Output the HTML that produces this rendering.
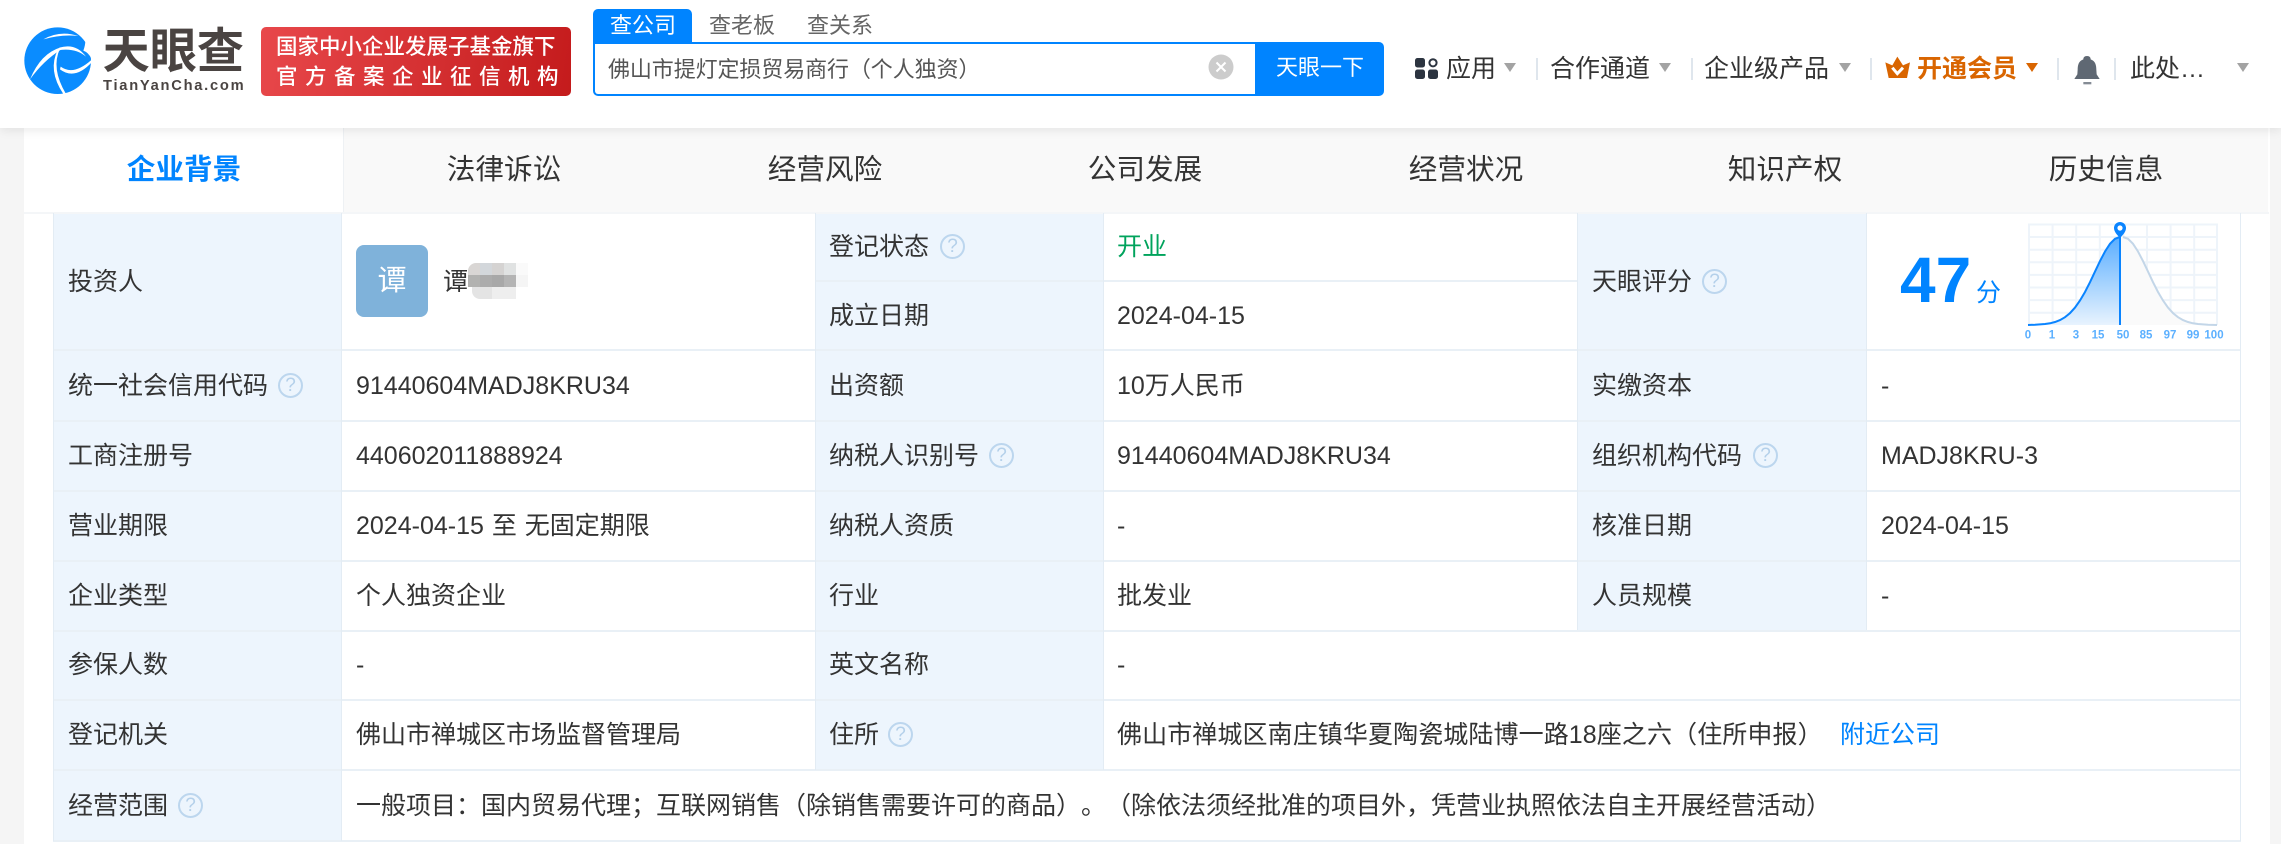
<!DOCTYPE html>
<html lang="zh-CN">
<head>
<meta charset="utf-8">
<title>天眼查</title>
<style>
*{box-sizing:border-box}
html,body{margin:0;padding:0}
body{position:relative;width:2281px;height:844px;overflow:hidden;background:#f5f5f5;color:#333;font-family:"Liberation Sans","Noto Sans CJK SC",sans-serif;text-spacing-trim:space-all}
.a{position:absolute}
.t{position:absolute;white-space:nowrap;line-height:40px;height:40px;font-size:25px;margin-top:1px}
.v{font-size:25px;color:#333}
.h{position:absolute;height:2px;background:#e9f0f6}
.w{position:absolute;width:1px;background:#e3ecf4}
.lb{position:absolute;background:#edf5fd}
.sep{position:absolute;top:58px;width:2px;height:22px;background:#dfe6ed}
.ar{position:absolute;top:63px;width:0;height:0;border-left:6.5px solid transparent;border-right:6.5px solid transparent;border-top:9px solid #a3a3a3}
.q{position:absolute;width:25px;height:25px;border:2px solid #bcd6ee;border-radius:50%;color:#b4d0ea;font-size:19px;line-height:21px;text-align:center}
.tab{position:absolute;top:148px;width:320px;text-align:center;font-size:28.6px;line-height:44px;color:#333;white-space:nowrap}
.m{position:absolute;width:12px;height:12px}
</style>
</head>
<body>
<!-- page panel -->
<div class="a" style="left:24px;top:128px;width:2246px;height:716px;background:#fff"></div>
<!-- tab bar -->
<div class="a" style="left:343px;top:128px;width:1925px;height:85px;background:#f9f9f9;border-left:1px solid #eef1f4"></div>
<div class="tab" style="left:24px;color:#0084ff;font-weight:700">企业背景</div>
<div class="tab" style="left:344px">法律诉讼</div>
<div class="tab" style="left:665px">经营风险</div>
<div class="tab" style="left:985px">公司发展</div>
<div class="tab" style="left:1306px">经营状况</div>
<div class="tab" style="left:1625px">知识产权</div>
<div class="tab" style="left:1946px">历史信息</div>

<!-- header -->
<div class="a" style="left:0;top:0;width:2281px;height:128px;background:#fff;box-shadow:0 2px 10px rgba(0,0,0,.09)"></div>

<!-- logo -->
<svg class="a" style="left:10px;top:10px" width="260" height="100" viewBox="0 0 780 300">
<circle cx="143" cy="152" r="100" fill="#0a8cff"/>
<path d="M100 88 Q150 60 205 78 Q155 72 100 88Z" fill="#fff"/>
<path d="M148 113 Q198 98 228 140 Q198 114 150 120Z" fill="#fff"/>
<path d="M152 112 Q92 130 60 208 Q100 152 154 118Z" fill="#fff"/>
<path d="M150 116 Q122 175 168 252 L160 252 Q112 180 144 118Z" fill="#fff"/>
<path d="M152 170 Q190 198 244 150 L246 156 Q195 212 150 178Z" fill="#fff"/>
<path d="M226 92 Q244 118 244 146 Q236 128 220 122 Q226 106 226 92Z" fill="#fff"/>
<text x="278" y="172" font-family="Noto Sans CJK SC,sans-serif" font-weight="700" font-size="144" fill="#4a4442" textLength="424" lengthAdjust="spacingAndGlyphs">天眼查</text>
<text x="279" y="240" font-family="Liberation Sans,sans-serif" font-weight="700" font-size="44" fill="#4a4442" textLength="422" lengthAdjust="spacing">TianYanCha.com</text>
</svg>

<!-- red badge -->
<div class="a" style="left:261px;top:27px;width:310px;height:69px;border-radius:5px;background:linear-gradient(100deg,#e8484b,#c41b1c)"></div>
<div class="t" style="left:276px;top:27px;font-size:21.5px;font-weight:500;color:#fff;line-height:38px;height:38px">国家中小企业发展子基金旗下</div>
<div class="t" style="left:276px;top:57px;font-size:21.5px;font-weight:500;color:#fff;line-height:38px;height:38px;letter-spacing:7.5px">官方备案企业征信机构</div>

<!-- search tabs -->
<div class="a" style="left:593px;top:9px;width:99px;height:34px;background:#0084ff;border-radius:5px 5px 0 0"></div>
<div class="t" style="left:610px;top:5px;font-size:22px;color:#fff">查公司</div>
<div class="t" style="left:709px;top:5px;font-size:22px;color:#666">查老板</div>
<div class="t" style="left:807px;top:5px;font-size:22px;color:#666">查关系</div>
<!-- search box -->
<div class="a" style="left:593px;top:42px;width:664px;height:54px;border:2px solid #0084ff;border-right:0;border-radius:0 0 0 5px;background:#fff"></div>
<div class="t" style="left:608px;top:49px;font-size:22px;color:#555;letter-spacing:-.1px">佛山市提灯定损贸易商行（个人独资）</div>
<svg class="a" style="left:1208px;top:54px" width="26" height="26" viewBox="0 0 26 26"><circle cx="13" cy="13" r="12.5" fill="#cccccc"/><path d="M8.5 8.5L17.5 17.5M17.5 8.5L8.5 17.5" stroke="#fff" stroke-width="2" fill="none"/></svg>
<div class="a" style="left:1255px;top:42px;width:129px;height:54px;background:#0084ff;border-radius:0 5px 5px 0"></div>
<div class="t" style="left:1276px;top:47px;font-size:22px;color:#fff">天眼一下</div>

<!-- nav -->
<svg class="a" style="left:1415px;top:58px" width="23" height="21" viewBox="0 0 23 21">
<rect x="0" y="0" width="10" height="9.5" rx="2.5" fill="#2c3440"/>
<circle cx="18" cy="4.8" r="3.6" fill="none" stroke="#2c3440" stroke-width="2"/>
<rect x="0" y="11.5" width="10" height="9.5" rx="2.5" fill="#2c3440"/>
<rect x="13" y="11.5" width="10" height="9.5" rx="2.5" fill="#2c3440"/>
</svg>
<div class="t" style="left:1446px;top:48px">应用</div>
<div class="ar" style="left:1504px"></div>
<div class="sep" style="left:1536px"></div>
<div class="t" style="left:1550px;top:48px">合作通道</div>
<div class="ar" style="left:1659px"></div>
<div class="sep" style="left:1691px"></div>
<div class="t" style="left:1704px;top:48px">企业级产品</div>
<div class="ar" style="left:1839px"></div>
<div class="sep" style="left:1870px"></div>
<svg class="a" style="left:1875px;top:45px" width="250" height="50" viewBox="0 0 750 150">
<path d="M31 52 L52 61 L67 35 L84 61 L105 52 L96 99 L41 99Z" fill="#d96500"/>
<path d="M52 68 L67 86 L84 68" fill="none" stroke="#fff" stroke-width="9"/>
<path d="M636 33 c-8 0-11 5-11 10 c-14 5-17 17-17 31 l-1 14 -9 14 h76 l-9-14 -1-14 c0-14-3-26-17-31 c0-5-3-10-11-10z" fill="#5f6873"/>
<rect x="625" y="111" width="24" height="7" fill="#858c95"/>
</svg>
<div class="t" style="left:1917px;top:48px;font-weight:700;color:#d96500">开通会员</div>
<div class="ar" style="left:2026px;border-top-color:#d96500"></div>
<div class="sep" style="left:2057px"></div>
<div class="sep" style="left:2114px"></div>
<div class="t" style="left:2130px;top:48px">此处…</div>
<div class="ar" style="left:2237px"></div>

<!-- table label backgrounds -->
<div class="lb" style="left:53px;top:213px;width:288px;height:627px"></div>
<div class="lb" style="left:815px;top:213px;width:288px;height:557px"></div>
<div class="lb" style="left:1577px;top:213px;width:289px;height:417px"></div>

<!-- lines -->
<div class="a" style="left:24px;top:212px;width:2245px;height:2px;background:#f4f6f8"></div>
<div class="h" style="left:815px;top:280px;width:762px"></div>
<div class="h" style="left:53px;top:349px;width:2188px"></div>
<div class="h" style="left:53px;top:420px;width:2188px"></div>
<div class="h" style="left:53px;top:490px;width:2188px"></div>
<div class="h" style="left:53px;top:560px;width:2188px"></div>
<div class="h" style="left:53px;top:630px;width:2188px"></div>
<div class="h" style="left:53px;top:699px;width:2188px"></div>
<div class="h" style="left:53px;top:769px;width:2188px"></div>
<div class="h" style="left:53px;top:840px;width:2188px"></div>
<div class="w" style="left:53px;top:213px;height:628px"></div>
<div class="w" style="left:341px;top:213px;height:628px"></div>
<div class="w" style="left:815px;top:213px;height:557px"></div>
<div class="w" style="left:1103px;top:213px;height:557px"></div>
<div class="w" style="left:1577px;top:213px;height:417px"></div>
<div class="w" style="left:1866px;top:213px;height:417px"></div>
<div class="w" style="left:2240px;top:213px;height:628px"></div>

<!-- column 1 -->
<div class="t" style="left:68px;top:261px">投资人</div>
<div class="t" style="left:68px;top:365px">统一社会信用代码</div>
<div class="q" style="left:278px;top:373px">?</div>
<div class="t" style="left:68px;top:435px">工商注册号</div>
<div class="t" style="left:68px;top:505px">营业期限</div>
<div class="t" style="left:68px;top:575px">企业类型</div>
<div class="t" style="left:68px;top:644px">参保人数</div>
<div class="t" style="left:68px;top:714px">登记机关</div>
<div class="t" style="left:68px;top:785px">经营范围</div>
<div class="q" style="left:178px;top:793px">?</div>

<!-- column 2 -->
<div class="a" style="left:356px;top:245px;width:72px;height:72px;background:#7fb2da;border-radius:8px;color:#fff;font-size:29px;line-height:72px;text-align:center">谭</div>
<div class="t" style="left:443px;top:261px">谭</div>
<div class="m" style="left:468px;top:263px;background:#d9d6d4;border-radius:8px 0 0 0"></div>
<div class="m" style="left:480px;top:263px;background:#d3d7db"></div>
<div class="m" style="left:492px;top:263px;background:#d5d3d2"></div>
<div class="m" style="left:504px;top:263px;background:#e0e2e2"></div>
<div class="m" style="left:516px;top:263px;background:#fafafa"></div>
<div class="m" style="left:468px;top:275px;background:#b2b2b0"></div>
<div class="m" style="left:480px;top:275px;background:#acacac"></div>
<div class="m" style="left:492px;top:275px;background:#a8a8a8"></div>
<div class="m" style="left:504px;top:275px;background:#b4b4b4"></div>
<div class="m" style="left:516px;top:275px;background:#f5f5f5"></div>
<div class="m" style="left:472px;top:287px;width:8px;background:#e4e4e4;border-radius:0 0 0 8px"></div>
<div class="m" style="left:480px;top:287px;background:#e4e4e4"></div>
<div class="m" style="left:492px;top:287px;background:#eeeeee"></div>
<div class="m" style="left:504px;top:287px;background:#eeeeee"></div>
<div class="t" style="left:356px;top:365px">91440604MADJ8KRU34</div>
<div class="t" style="left:356px;top:435px">440602011888924</div>
<div class="t" style="left:356px;top:505px;word-spacing:1px">2024-04-15 至 无固定期限</div>
<div class="t" style="left:356px;top:575px">个人独资企业</div>
<div class="t" style="left:356px;top:644px">-</div>
<div class="t" style="left:356px;top:714px">佛山市禅城区市场监督管理局</div>
<div class="t" style="left:356px;top:785px">一般项目：国内贸易代理；互联网销售（除销售需要许可的商品）。（除依法须经批准的项目外，凭营业执照依法自主开展经营活动）</div>

<!-- column 3 -->
<div class="t" style="left:829px;top:226px">登记状态</div>
<div class="q" style="left:940px;top:234px">?</div>
<div class="t" style="left:829px;top:295px">成立日期</div>
<div class="t" style="left:829px;top:365px">出资额</div>
<div class="t" style="left:829px;top:435px">纳税人识别号</div>
<div class="q" style="left:989px;top:443px">?</div>
<div class="t" style="left:829px;top:505px">纳税人资质</div>
<div class="t" style="left:829px;top:575px">行业</div>
<div class="t" style="left:829px;top:644px">英文名称</div>
<div class="t" style="left:829px;top:714px">住所</div>
<div class="q" style="left:888px;top:722px">?</div>

<!-- column 4 -->
<div class="t" style="left:1117px;top:226px;color:#00a35c">开业</div>
<div class="t" style="left:1117px;top:295px">2024-04-15</div>
<div class="t" style="left:1117px;top:365px">10万人民币</div>
<div class="t" style="left:1117px;top:435px">91440604MADJ8KRU34</div>
<div class="t" style="left:1117px;top:505px">-</div>
<div class="t" style="left:1117px;top:575px">批发业</div>
<div class="t" style="left:1117px;top:644px">-</div>
<div class="t" style="left:1117px;top:714px;letter-spacing:.1px">佛山市禅城区南庄镇华夏陶瓷城陆博一路18座之六（住所申报）</div>
<div class="t" style="left:1840px;top:714px;color:#0084ff">附近公司</div>

<!-- column 5 -->
<div class="t" style="left:1592px;top:261px">天眼评分</div>
<div class="q" style="left:1702px;top:269px">?</div>
<div class="t" style="left:1592px;top:365px">实缴资本</div>
<div class="t" style="left:1592px;top:435px">组织机构代码</div>
<div class="q" style="left:1753px;top:443px">?</div>
<div class="t" style="left:1592px;top:505px">核准日期</div>
<div class="t" style="left:1592px;top:575px">人员规模</div>

<!-- column 6 -->
<div class="a" style="left:1900px;top:242px;font-size:64px;line-height:76px;font-weight:700;color:#0084ff;white-space:nowrap">47</div>
<div class="t" style="left:1976px;top:272px;color:#0084ff">分</div>
<svg class="a" style="left:2020px;top:215px" width="220" height="130" viewBox="2020 215 220 130">
<defs><linearGradient id="g" x1="0" y1="0" x2="0" y2="1"><stop offset="0" stop-color="#5aaeff"/><stop offset="1" stop-color="#e8f3fe"/></linearGradient></defs>
<g stroke="#eef4fa" stroke-width="2" fill="none">
<path d="M2029 224V325M2052.600 224V325M2076.200 224V325M2099.800 224V325M2123.400 224V325M2147 224V325M2170.600 224V325M2194.200 224V325M2217 224V325"/>
<path d="M2028 224.500H2218M2028 237H2218M2028 249.700H2218M2028 262.300H2218M2028 274.900H2218M2028 287.500H2218M2028 300.100H2218M2028 312.700H2218"/>
</g>
<path d="M2120 237H2123L2128 238.800L2133 243.800L2138 251.500L2143 261.100L2148 271.600L2153 282.200L2158 292L2163 300.500L2168 307.600L2173 313.100L2178 317.200L2183 320.100L2188 322L2193 323.300L2198 324L2208 324.700L2217 325H2120Z" fill="#fafafa"/>
<path d="M2123 237L2128 238.800L2133 243.800L2138 251.500L2143 261.100L2148 271.600L2153 282.200L2158 292L2163 300.500L2168 307.600L2173 313.100L2178 317.200L2183 320.100L2188 322L2193 323.300L2198 324L2208 324.700L2217 325" fill="none" stroke="#c3d6e8" stroke-width="2"/>
<path d="M2028 325L2035 324.700L2045 324L2050 323.300L2055 322L2060 320.100L2065 317.200L2070 313.100L2075 307.600L2080 300.500L2085 292L2090 282.200L2095 271.600L2100 261.100L2105 251.500L2110 243.800L2115 238.800L2120 237V325Z" fill="url(#g)"/>
<path d="M2028 325L2035 324.700L2045 324L2050 323.300L2055 322L2060 320.100L2065 317.200L2070 313.100L2075 307.600L2080 300.500L2085 292L2090 282.200L2095 271.600L2100 261.100L2105 251.500L2110 243.800L2115 238.800L2120 237" fill="none" stroke="#0a84ff" stroke-width="2"/>
<path d="M2120 236V325" stroke="#0a84ff" stroke-width="2"/>
<path d="M2120 238 C2116 234 2114 231 2114 228 A6 6 0 0 1 2126 228 C2126 231 2124 234 2120 238Z" fill="#0a84ff"/>
<circle cx="2120" cy="228" r="2.600" fill="#fff"/>
<g font-family="Liberation Sans,sans-serif" font-size="11.500" fill="#5cb0ff" text-anchor="middle" font-weight="700">
<text x="2028" y="338.500">0</text><text x="2052" y="338.500">1</text><text x="2076" y="338.500">3</text><text x="2098" y="338.500">15</text><text x="2123" y="338.500">50</text><text x="2146" y="338.500">85</text><text x="2170" y="338.500">97</text><text x="2193" y="338.500">99</text><text x="2214" y="338.500">100</text>
</g>
</svg>
<div class="t" style="left:1881px;top:365px">-</div>
<div class="t" style="left:1881px;top:435px">MADJ8KRU-3</div>
<div class="t" style="left:1881px;top:505px">2024-04-15</div>
<div class="t" style="left:1881px;top:575px">-</div>
</body>
</html>
